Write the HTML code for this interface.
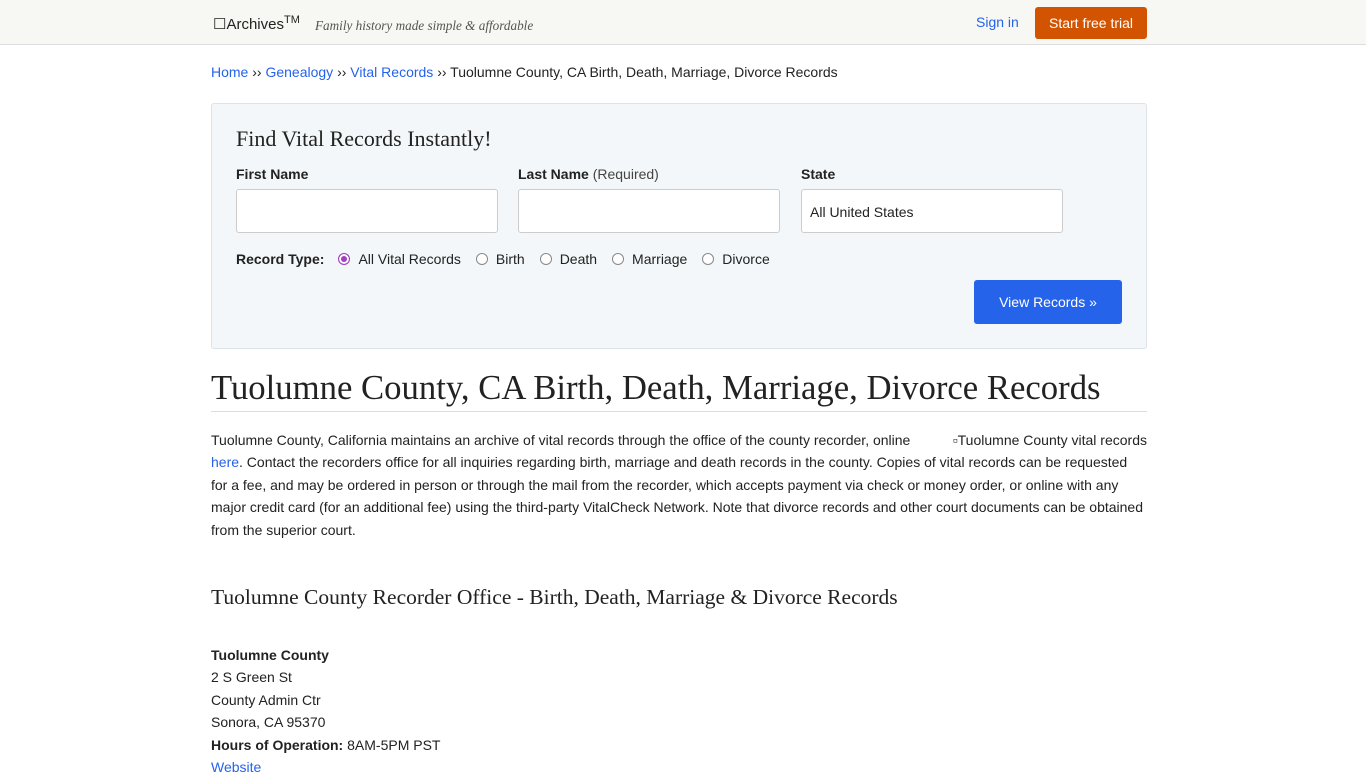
<!DOCTYPE html>
<html><head><meta charset="utf-8"><style>
*{box-sizing:border-box}
body{margin:0;font-family:"Liberation Sans",sans-serif;font-size:14px;color:#222;background:#fff;overflow:hidden}
.hdr{height:45px;background:#f7f7f4;border-bottom:1px solid #ddd;position:relative}
.w{position:absolute;left:211px;width:936px}
.logo{position:absolute;left:213px;top:14px;font-size:15px;color:#222}
.logo sup{font-size:11px}
.tag{position:absolute;left:315px;top:18px;font-family:"Liberation Serif",serif;font-style:italic;font-size:13.2px;color:#555}
.sign{position:absolute;left:976px;top:14px;color:#2563eb;font-size:14px}
.trial{position:absolute;left:1035px;top:7px;width:112px;height:32px;background:#d35400;color:#fff;border-radius:3px;font-size:14px;line-height:32px;text-align:center}
a{color:#2563eb;text-decoration:none}
.bc{top:64px;font-size:14px}
.box{top:103px;height:246px;background:#f4f7f9;border:1px solid #dde3e8;border-radius:3px}
.box h3{position:absolute;left:24px;top:22px;margin:0;font-family:"Liberation Serif",serif;font-weight:normal;font-size:22px;color:#222}
.lbl{position:absolute;top:62px;font-weight:bold;font-size:14px}
.inp{position:absolute;top:85px;width:262px;height:44px;background:#fff;border:1px solid #ccc;border-radius:3px;padding:14px 8px;font-size:14px}
.rt{position:absolute;left:24px;top:147px;font-size:14px}
.rt b{margin-right:14px}
.r{display:inline-block;width:12px;height:12px;border:1px solid #888;border-radius:50%;margin:0 8px 0 0;vertical-align:-1px;background:#fff}
.r.on{border-color:#a040c0;box-shadow:inset 0 0 0 2px #fff;background:#a040c0}
.rt span{margin-right:15px}
.btn{position:absolute;left:762px;top:176px;width:148px;height:44px;background:#2563eb;color:#fff;border-radius:3px;line-height:44px;text-align:center;font-size:14px}
h1{top:368px;margin:0;font-family:"Liberation Serif",serif;font-weight:normal;font-size:34.7px;border-bottom:1px solid #ddd;padding-bottom:3px;color:#222}
.p{top:429px;line-height:22.4px;font-size:14px}
h2{top:585px;margin:0;font-family:"Liberation Serif",serif;font-weight:normal;font-size:21.5px}
.addr{top:644px;line-height:22.4px}
</style></head><body>
<div class="hdr">
<div class="logo">☐Archives<sup>TM</sup></div>
<div class="tag">Family history made simple &amp; affordable</div>
<a class="sign">Sign in</a>
<div class="trial">Start free trial</div>
</div>
<div class="w bc"><a>Home</a> ›› <a>Genealogy</a> ›› <a>Vital Records</a> ›› Tuolumne County, CA Birth, Death, Marriage, Divorce Records</div>
<div class="w box">
<h3>Find Vital Records Instantly!</h3>
<div class="lbl" style="left:24px">First Name</div>
<div class="lbl" style="left:306px">Last Name <span style="font-weight:normal;color:#444">(Required)</span></div>
<div class="lbl" style="left:589px">State</div>
<div class="inp" style="left:24px"></div>
<div class="inp" style="left:306px"></div>
<div class="inp" style="left:589px">All United States</div>
<div class="rt"><b>Record Type:</b><i class="r on"></i><span>All Vital Records</span><i class="r"></i><span>Birth</span><i class="r"></i><span>Death</span><i class="r"></i><span>Marriage</span><i class="r"></i><span>Divorce</span></div>
<div class="btn">View Records »</div>
</div>
<h1 class="w">Tuolumne County, CA Birth, Death, Marriage, Divorce Records</h1>
<div class="w p"><span style="float:right;margin-left:30px">▫Tuolumne County vital records</span>Tuolumne County, California maintains an archive of vital records through the office of the county recorder, online <a>here</a>. Contact the recorders office for all inquiries regarding birth, marriage and death records in the county. Copies of vital records can be requested for a fee, and may be ordered in person or through the mail from the recorder, which accepts payment via check or money order, or online with any major credit card (for an additional fee) using the third-party VitalCheck Network. Note that divorce records and other court documents can be obtained from the superior court.</div>
<h2 class="w">Tuolumne County Recorder Office - Birth, Death, Marriage &amp; Divorce Records</h2>
<div class="w addr"><b>Tuolumne County</b><br>2 S Green St<br>County Admin Ctr<br>Sonora, CA 95370<br><b>Hours of Operation:</b> 8AM-5PM PST<br><a>Website</a></div>
</body></html>
